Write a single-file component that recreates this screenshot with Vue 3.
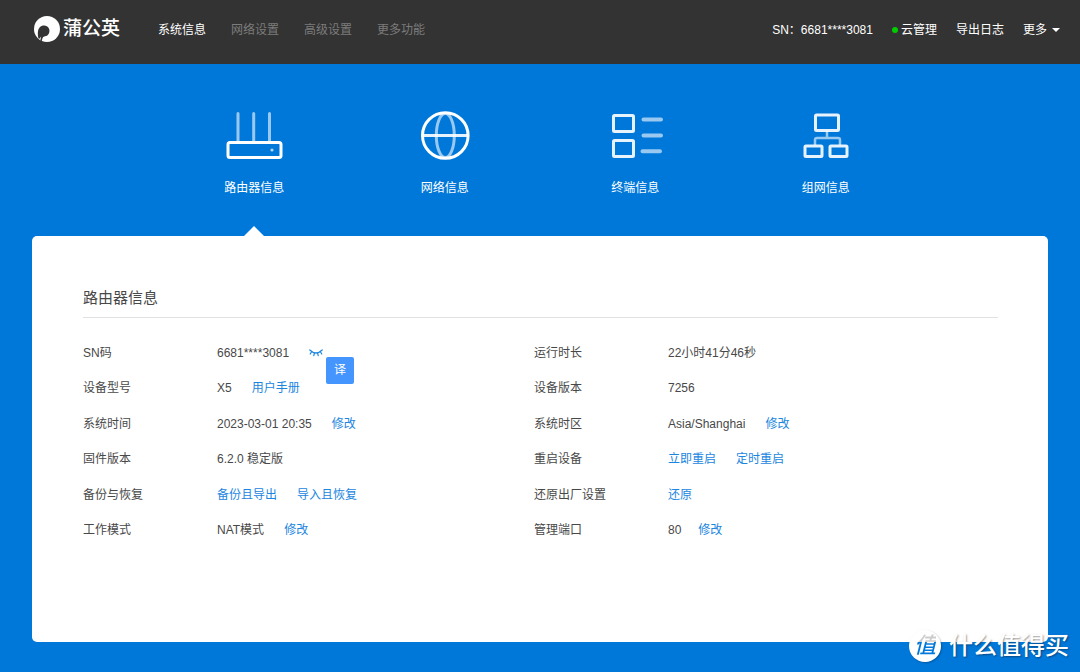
<script setup>
const nav = ['系统信息', '网络设置', '高级设置', '更多功能']
const tabs = [
  { id: 'router', label: '路由器信息' },
  { id: 'network', label: '网络信息' },
  { id: 'device', label: '终端信息' },
  { id: 'group', label: '组网信息' }
]
const columns = [
  [
    { label: 'SN码', value: '6681****3081', masked: true },
    { label: '设备型号', value: 'X5', links: ['用户手册'] },
    { label: '系统时间', value: '2023-03-01 20:35', links: ['修改'] },
    { label: '固件版本', value: '6.2.0 稳定版' },
    { label: '备份与恢复', links: ['备份且导出', '导入且恢复'] },
    { label: '工作模式', value: 'NAT模式', links: ['修改'] }
  ],
  [
    { label: '运行时长', value: '22小时41分46秒' },
    { label: '设备版本', value: '7256' },
    { label: '系统时区', value: 'Asia/Shanghai', links: ['修改'] },
    { label: '重启设备', links: ['立即重启', '定时重启'] },
    { label: '还原出厂设置', links: ['还原'] },
    { label: '管理端口', value: '80', links: ['修改'], tight: true }
  ]
]
</script>

<template>
  <div class="page">
    <header class="topbar">
      <a class="logo" href="#">
        <svg class="logo-mark" viewBox="0 0 26 26" aria-hidden="true">
          <circle cx="13" cy="13" r="13" fill="#fff" />
          <path d="M4.6 22.800C3.400 18.500 3.600 13.500 5.600 11.500C8.200 8.800 13 9 14.800 12.200C16.600 15.600 14.600 20 11 20.300C9 20.500 8.300 22 7.800 25.200L6.200 24.500L7.200 20.500L5.400 22.800Z" fill="#333" />
        </svg>
        <span>蒲公英</span>
      </a>
      <nav class="nav">
        <a v-for="(item, i) in nav" :key="item" href="#" :class="{ active: i === 0 }">{{ item }}</a>
      </nav>
      <div class="tools">
        <span>SN：6681****3081</span>
        <a class="cloud" href="#"><i class="dot"></i>云管理</a>
        <a href="#">导出日志</a>
        <button class="more" type="button">更多<i class="caret"></i></button>
      </div>
    </header>

    <nav class="tabs">
      <a v-for="(tab, i) in tabs" :key="tab.id" href="#" class="tab" :class="{ active: i === 0 }">
        <svg class="icon" viewBox="0 0 60 60" fill="none" stroke="#fff" stroke-width="3" aria-hidden="true">
          <template v-if="tab.id === 'router'">
            <path d="M14 7.500V36M29.700 7.500V36M45.500 7.500V36" opacity=".6" stroke-linecap="round" />
            <rect x="4" y="36.500" width="53" height="15" rx="2" />
            <circle cx="48" cy="44" r="1.600" fill="#fff" stroke="none" opacity=".7" />
          </template>
          <template v-else-if="tab.id === 'network'">
            <ellipse cx="30.300" cy="29.500" rx="9" ry="22" opacity=".6" />
            <path d="M7 29.500H53" opacity=".9" />
            <circle cx="30.300" cy="29.500" r="22.800" />
          </template>
          <template v-else-if="tab.id === 'device'">
            <rect x="8.500" y="9.500" width="20" height="16" rx="1" opacity=".9" />
            <rect x="8.500" y="34.500" width="20" height="16" rx="1" opacity=".9" />
            <path d="M38.500 13.500H56M38.500 29.500H56M37.500 45.200H55" stroke-width="4" stroke-linecap="round" opacity=".6" />
          </template>
          <template v-else>
            <path d="M31 25V32M19 39V34Q19 32 21 32H42Q44 32 44 34V39" stroke-width="2.500" opacity=".6" />
            <rect x="19.500" y="9" width="23" height="15.500" rx="1" opacity=".9" />
            <rect x="9" y="40" width="17" height="10.500" rx="1" opacity=".9" />
            <rect x="34" y="40" width="17" height="10.500" rx="1" opacity=".9" />
          </template>
        </svg>
        <span>{{ tab.label }}</span>
      </a>
    </nav>

    <main class="card">
      <h1>路由器信息</h1>
      <div class="columns">
        <dl v-for="(rows, c) in columns" :key="c">
          <div v-for="row in rows" :key="row.label" class="row">
            <dt>{{ row.label }}</dt>
            <dd :class="{ tight: row.tight }">
              <span v-if="row.value">{{ row.value }}</span>
              <button v-if="row.masked" class="eye" type="button" aria-label="显示">
                <svg viewBox="0 0 14 8" fill="none" stroke="#1b86e0" stroke-width="1.200" stroke-linecap="round" aria-hidden="true">
                  <path d="M0.800 1Q7 7 13.200 1M2.600 2.800L1.200 5M5.400 4L4.800 6.600M8.600 4L9.200 6.600M11.400 2.800L12.800 5" />
                </svg>
              </button>
              <a v-for="link in row.links" :key="link" href="#">{{ link }}</a>
              <button v-if="row.masked" class="translate" type="button">译</button>
            </dd>
          </div>
        </dl>
      </div>
    </main>

    <div class="watermark">
      <span class="seal"><span>值</span></span>
      <span class="brand">什么值得买</span>
    </div>
  </div>
</template>

<style>
body {
  margin: 0;
}
</style>

<style scoped>
.page {
  position: relative;
  display: flex;
  flex-direction: column;
  min-height: 100vh;
  background: #0078da;
  color: #484848;
  font: 12px/18px "Liberation Sans", "Noto Sans CJK SC", sans-serif;
}
a {
  color: #1b86e0;
  text-decoration: none;
}
button {
  padding: 0;
  border: 0;
  background: none;
  color: inherit;
  font: inherit;
  cursor: pointer;
}
.topbar {
  display: flex;
  align-items: center;
  box-sizing: border-box;
  height: 64px;
  padding: 0 20px 4px 34px;
  background: #333;
  color: #fff;
}
.topbar a {
  color: #fff;
}
.logo {
  display: flex;
  align-items: center;
  gap: 3px;
  padding-bottom: 2px;
  font-size: 19px;
  font-weight: 500;
  line-height: 26px;
}
.logo-mark {
  width: 26px;
  height: 26px;
}
.nav {
  display: flex;
  gap: 25px;
  margin-left: 38px;
}
.topbar .nav a {
  color: #7c7c7c;
}
.topbar .nav a.active {
  color: #fff;
}
.tools {
  display: flex;
  align-items: center;
  gap: 19px;
  margin-left: auto;
}
.cloud,
.more {
  display: flex;
  align-items: center;
}
.dot {
  width: 6px;
  height: 6px;
  margin-right: 3px;
  border-radius: 50%;
  background: #0c0;
}
.caret {
  margin-left: 5px;
  border: 4px solid transparent;
  border-top-color: #fff;
  border-bottom: 0;
}
.tabs {
  display: grid;
  grid-template-columns: repeat(4, 1fr);
  width: calc(75% - 48px);
  margin: 0 auto;
}
.tab {
  position: relative;
  display: flex;
  flex-direction: column;
  align-items: center;
  gap: 13px;
  padding: 42px 0 39px;
  color: #fff;
}
.icon {
  width: 60px;
  height: 60px;
}
.tab.active::after {
  content: "";
  position: absolute;
  bottom: 0;
  left: 50%;
  margin-left: -10px;
  border: 10px solid transparent;
  border-top: 0;
  border-bottom-color: #fff;
}
.card {
  flex: 1;
  margin: 0 32px 30px;
  padding: 50px 50px 50px 51px;
  border-radius: 5px;
  background: #fff;
}
h1 {
  margin: 0;
  padding-bottom: 7px;
  border-bottom: 1px solid #e2e2e2;
  font-size: 15px;
  font-weight: 400;
  line-height: 24px;
}
.columns {
  display: grid;
  grid-template-columns: 451fr 464fr;
  margin-top: 17px;
}
dl {
  display: grid;
  grid-auto-rows: 1fr;
  height: 213px;
  margin: 0;
}
.row {
  display: flex;
  align-items: center;
}
dt {
  width: 134px;
}
dd {
  position: relative;
  display: flex;
  align-items: center;
  gap: 20px;
  margin: 0;
}
dd.tight {
  gap: 17px;
}
.eye {
  display: flex;
}
.eye svg {
  width: 14px;
  height: 8px;
}
.translate {
  position: absolute;
  top: 13px;
  left: 109px;
  width: 28px;
  height: 27px;
  border-radius: 2px;
  background: #4595ff;
  color: #fff;
}
.watermark {
  position: absolute;
  right: 11px;
  bottom: 8px;
  display: flex;
  align-items: center;
  gap: 8px;
  color: #fff;
}
.seal {
  display: flex;
  align-items: center;
  justify-content: center;
  width: 32px;
  height: 32px;
  border-radius: 50%;
  background: #fff;
  box-shadow: 1px 1px 2px rgba(0, 0, 0, 0.25);
  font-size: 22px;
  font-style: italic;
  font-weight: 500;
  line-height: 32px;
}
.seal span {
  background: linear-gradient(#ccc 12px, #0078da 12px);
  background-clip: text;
  color: transparent;
}
.brand {
  font-size: 24px;
  font-weight: 500;
  line-height: 36px;
  text-shadow: 1px 1px 2px rgba(0, 0, 0, 0.4);
}
</style>
